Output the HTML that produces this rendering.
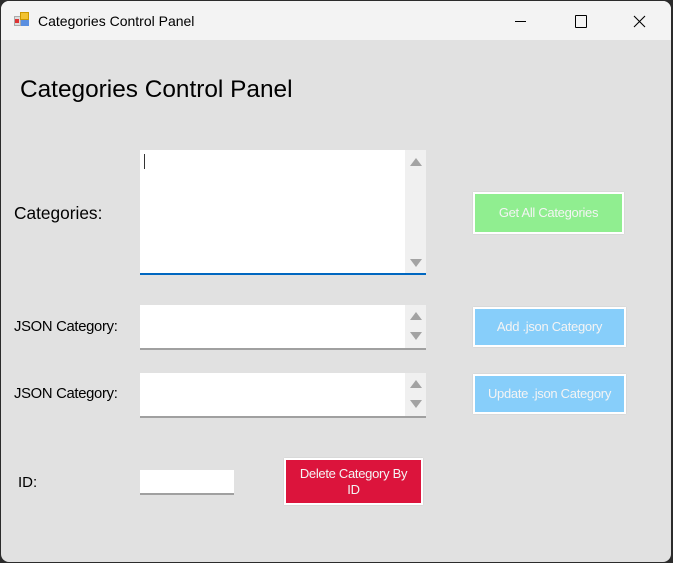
<!DOCTYPE html>
<html><head><style>
html,body{margin:0;padding:0;}
body{width:673px;height:563px;background:#2b2b2b;position:relative;overflow:hidden;font-family:"Liberation Sans",Arial,sans-serif;}
.win{position:absolute;left:1px;top:1px;width:670px;height:561px;background:#e1e1e1;border-radius:8px;overflow:hidden;}
.tb{position:absolute;left:0;top:0;width:670px;height:39px;background:#f3f3f3;}
.abs{position:absolute;}
.lbl{position:absolute;color:#000;font-size:14px;}
.tbx{position:absolute;background:#fff;border-bottom:2px solid #a0a0a0;box-sizing:border-box;}
.sb{position:absolute;right:0;top:0;width:21px;bottom:0;background:#f0f0f0;}
.up,.dn{position:absolute;left:5px;width:0;height:0;border-left:6px solid transparent;border-right:6px solid transparent;}
.up{border-bottom:8px solid #a3a3a3;}
.dn{border-top:8px solid #a3a3a3;}
.btn{position:absolute;box-sizing:border-box;border:2px solid #fff;box-shadow:0 0 1px #bbb;color:#f4f4f4;font-size:13px;text-align:center;display:flex;align-items:center;justify-content:center;line-height:16px;letter-spacing:-0.3px;}
</style></head><body>
<div class="win">
<div class="tb">
 <div class="abs" style="left:13px;top:11px;width:16px;height:15px;">
  <div class="abs" style="left:0;top:4px;width:7px;height:10px;background:#ddd;border:1px solid #aaa;box-sizing:border-box"></div>
  <div class="abs" style="left:1px;top:7px;width:4px;height:4px;background:#d33"></div>
  <div class="abs" style="left:6px;top:0;width:9px;height:8px;background:#f2c230;border:1px solid #c90;box-sizing:border-box"></div>
  <div class="abs" style="left:7px;top:8px;width:8px;height:6px;background:#5a8ee0"></div>
 </div>
 <div class="abs" style="left:37px;top:12px;font-size:14px;color:#000;">Categories Control Panel</div>
 <div class="abs" style="left:514px;top:20px;width:11px;height:1px;background:#000"></div>
 <div class="abs" style="left:574px;top:14px;width:10px;height:11px;border:1px solid #000;border-radius:1px"></div>
 <svg class="abs" style="left:632px;top:14px" width="13" height="13"><path d="M1 1L12 12M12 1L1 12" stroke="#000" stroke-width="1.1"/></svg>
</div>
<div class="lbl" style="left:19px;top:75px;font-size:24.4px;">Categories Control Panel</div>
<div class="lbl" style="left:13px;top:202px;font-size:17.3px;">Categories:</div>
<div class="tbx" style="left:139px;top:149px;width:286px;height:125px;border-bottom:2px solid #0067c0;">
 <div class="abs" style="left:4px;top:4px;width:1px;height:15px;background:#333"></div>
 <div class="sb"><div class="up" style="top:8px"></div><div class="dn" style="bottom:6px"></div></div>
</div>
<div class="btn" style="left:472px;top:191px;width:151px;height:42px;background:#90ee90;">Get All Categories</div>
<div class="lbl" style="left:13px;top:318px;font-size:14.8px;letter-spacing:-0.3px;">JSON Category:</div>
<div class="tbx" style="left:139px;top:304px;width:286px;height:45px;">
 <div class="sb"><div class="up" style="top:7px"></div><div class="dn" style="top:27px"></div></div>
</div>
<div class="btn" style="left:472px;top:306px;width:153px;height:40px;background:#87cefa;">Add .json Category</div>
<div class="lbl" style="left:13px;top:385px;font-size:14.8px;letter-spacing:-0.3px;">JSON Category:</div>
<div class="tbx" style="left:139px;top:372px;width:286px;height:45px;">
 <div class="sb"><div class="up" style="top:7px"></div><div class="dn" style="top:27px"></div></div>
</div>
<div class="btn" style="left:472px;top:373px;width:153px;height:40px;background:#87cefa;">Update .json Category</div>
<div class="lbl" style="left:17px;top:473px;font-size:15px;">ID:</div>
<div class="tbx" style="left:139px;top:469px;width:94px;height:25px;"></div>
<div class="btn" style="left:283px;top:457px;width:139px;height:47px;background:#dc143c;">Delete Category By<br>ID</div>
</div>
</body></html>
